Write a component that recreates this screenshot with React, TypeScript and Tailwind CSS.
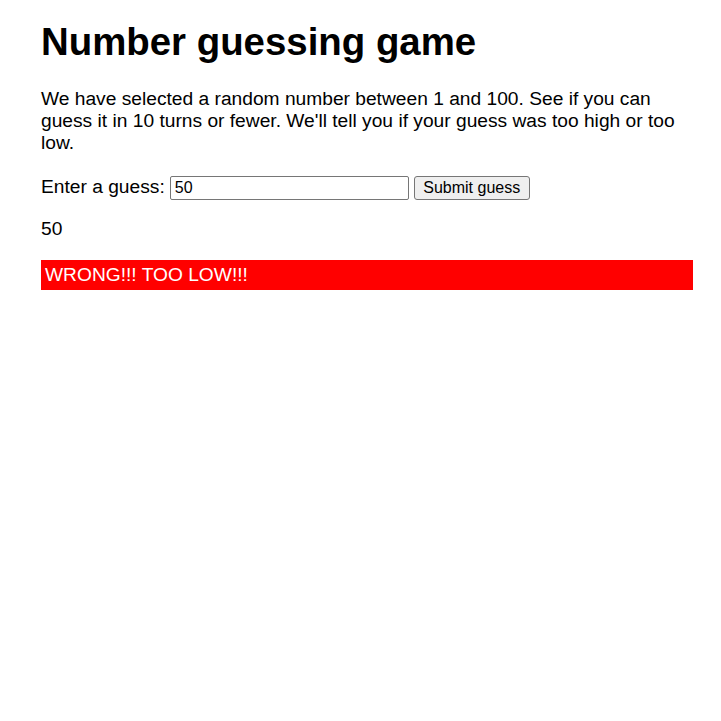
export default function App() {
	return (
		<div className="min-h-screen bg-white pl-[41px] pr-[28px] pt-[20px] font-['Liberation_Sans',Arial,sans-serif] text-[19.2px] leading-[normal] text-black">
			<h1 className="text-[38.4px] font-bold leading-[normal]">Number guessing game</h1>
			<p className="mt-[24px]">
				We have selected a random number between 1 and 100. See if you can guess it in 10 turns or fewer. We'll tell you if your guess was too high or too low.
			</p>
			<form className="mt-[22px] flex items-baseline" onSubmit={(e) => e.preventDefault()}>
				<label htmlFor="guessField">Enter a guess:</label>
				<input
					id="guessField"
					type="number"
					defaultValue="50"
					className="ml-[5px] h-[24px] w-[239px] rounded-[2px] border border-[#767676] bg-white px-[4px] text-[16px] text-black outline-none [appearance:textfield] [&::-webkit-inner-spin-button]:appearance-none"
				/>
				<button
					type="submit"
					className="ml-[5px] h-[24px] w-[116px] rounded-[3px] border border-[#767676] bg-[#efefef] text-[16px] leading-none text-black"
				>
					Submit guess
				</button>
			</form>
			<p className="mt-[18px]">50</p>
			<p className="mt-[20px] bg-[#ff0000] p-[4px] text-white">WRONG!!! TOO LOW!!!</p>
		</div>
	);
}
